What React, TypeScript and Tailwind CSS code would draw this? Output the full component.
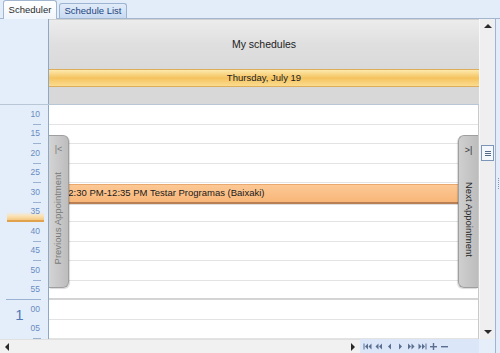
import React from "react";

const FONT = { fontFamily: '"Liberation Sans", Arial, sans-serif' };

const slots = ["10", "15", "20", "25", "30", "35", "40", "45", "50", "55", "00", "05"];

function RulerSlot({ label, index }: { label: string; index: number }) {
  const isHourEnd = index === 9;
  const isHour = index === 10;
  return (
    <div className="relative h-[19.5px] shrink-0 flex flex-col">
      {index === 5 && (
        <div className="absolute left-[7px] right-[4px] bottom-0 h-[10px] bg-gradient-to-b from-[#fdf1dc]/0 via-[#fbe2b4] to-[#f5c982] border-b-2 border-[#e0a24c]" />
      )}
      <div className="relative flex-1 flex items-center justify-end pr-[8px]">
        {isHour ? (
          <div className="flex items-start gap-[7px] pt-[7px]">
            <span className="text-[15px] leading-[15px] text-[#5479b3]">1</span>
            <span className="text-[8.5px] leading-[8px] text-[#6a8bc0] mt-[-2px]">{label}</span>
          </div>
        ) : (
          <span className="text-[8.5px] leading-[9px] text-[#6a8bc0]">{label}</span>
        )}
      </div>
      {isHourEnd ? (
        <div className="h-px w-[35px] self-end mr-[7px] bg-[#9bb2d3]" />
      ) : isHour ? (
        <div className="h-px w-[8px] self-end mr-[7px] bg-[#9bb2d3] mb-[2px]" />
      ) : (
        <div className="h-px w-[8px] self-end mr-[7px] bg-[#9bb2d3]" />
      )}
    </div>
  );
}

function Arrow({ dir, className = "" }: { dir: "l" | "r" | "u" | "d"; className?: string }) {
  const pts =
    dir === "l" ? "4,0 4,8 0,4" : dir === "r" ? "0,0 0,8 4,4" : dir === "u" ? "0,4 8,4 4,0" : "0,0 8,0 4,4";
  const w = dir === "l" || dir === "r" ? 4 : 8;
  const h = dir === "l" || dir === "r" ? 8 : 4;
  return (
    <svg width={w} height={h} viewBox={`0 0 ${w} ${h}`} className={className}>
      <polygon points={pts} fill="#2a2a2a" />
    </svg>
  );
}

function NavIcon({ kind }: { kind: string }) {
  const c = "#5a6f8f";
  return (
    <svg width="9" height="7" viewBox="0 0 9 7">
      {kind === "first" && (
        <g fill={c}>
          <rect x="0.5" y="0.5" width="1" height="6" />
          <polygon points="5,0.5 5,6.5 2,3.5" />
          <polygon points="8.5,0.5 8.5,6.5 5.5,3.5" />
        </g>
      )}
      {kind === "pp" && (
        <g fill={c}>
          <polygon points="4.5,0.5 4.5,6.5 1.5,3.5" />
          <polygon points="8,0.5 8,6.5 5,3.5" />
        </g>
      )}
      {kind === "p" && <polygon points="6,0.5 6,6.5 3,3.5" fill={c} />}
      {kind === "n" && <polygon points="3,0.5 3,6.5 6,3.5" fill={c} />}
      {kind === "nn" && (
        <g fill={c}>
          <polygon points="1,0.5 1,6.5 4,3.5" />
          <polygon points="4.5,0.5 4.5,6.5 7.5,3.5" />
        </g>
      )}
      {kind === "last" && (
        <g fill={c}>
          <polygon points="0.5,0.5 0.5,6.5 3.5,3.5" />
          <polygon points="4,0.5 4,6.5 7,3.5" />
          <rect x="7.5" y="0.5" width="1" height="6" />
        </g>
      )}
      {kind === "plus" && (
        <g fill={c}>
          <rect x="1" y="3" width="7" height="1.4" />
          <rect x="3.8" y="0" width="1.4" height="7" />
        </g>
      )}
      {kind === "minus" && <rect x="1" y="3" width="7" height="1.4" fill={c} />}
    </svg>
  );
}

export default function App() {
  return (
    <div className="w-[500px] h-[353px] overflow-hidden bg-[#e3edfa] flex flex-col" style={FONT}>
      {/* Tabs */}
      <div className="h-[19px] shrink-0 flex items-end pl-[3px] gap-[2px] border-b border-[#a3b6cf]">
        <div className="relative -mb-px h-[19px] w-[54px] rounded-t-[3px] border border-b-0 border-[#a3b6cf] bg-gradient-to-b from-white to-[#f1f6fd] flex items-center justify-center text-[9.5px] text-[#2b2b2b]">
          Scheduler
        </div>
        <div className="h-[15px] w-[68px] rounded-t-[3px] border border-b-0 border-[#9db3d2] bg-gradient-to-b from-[#e2ecf9] to-[#c8daf2] flex items-center justify-center text-[9.5px] text-[#1f4480]">
          Schedule List
        </div>
      </div>

      {/* Body */}
      <div className="flex-1 flex min-h-0">
        {/* Main column */}
        <div className="w-[479px] shrink-0 flex flex-col">
          {/* Header */}
          <div className="h-[86px] shrink-0 flex border-b border-[#b9c6d6]">
            <div className="w-[49px] shrink-0 border-r border-[#8ea7c8] bg-[#e4eefb]" />
            <div className="flex-1 flex flex-col">
              <div className="h-[50px] flex items-center justify-center bg-gradient-to-b from-[#ececec] via-[#dfdfdf] to-[#dadada] border-t border-[#d0d0d0] text-[10.5px] text-[#222]">
                My schedules
              </div>
              <div className="h-[18px] flex items-center justify-center border-y border-[#dcae5c] bg-gradient-to-b from-[#fde9ad] via-[#f5c35e] to-[#fbdc8e] text-[9.5px] text-[#222]">
                Thursday, July 19
              </div>
              <div className="flex-1 bg-[#d8d8d8]" />
            </div>
          </div>

          {/* Time grid */}
          <div className="flex-1 flex min-h-0 overflow-hidden">
            <div className="w-[49px] shrink-0 border-r border-[#8ea7c8] bg-[#e4eefb] flex flex-col overflow-hidden">
              {slots.map((s, i) => (
                <RulerSlot key={i} label={s} index={i} />
              ))}
            </div>
            <div className="relative flex-1 bg-white flex flex-col overflow-hidden border-r border-[#c9c9c9]">
              {slots.map((_, i) => (
                <div
                  key={i}
                  className={
                    i === 9
                      ? "h-[19.5px] shrink-0 border-b-2 border-[#d4d4d4]"
                      : "h-[19.5px] shrink-0 border-b border-[#e3e3e3]"
                  }
                />
              ))}

              {/* Appointment */}
              <div className="absolute left-0 right-0 top-[79px] h-[20px] bg-gradient-to-b from-[#fcc894] to-[#f8b679] border-t border-[#e8a86e] border-b-2 border-b-[#b98056] flex items-center pl-[14px] text-[9.5px] text-[#1a1a1a] whitespace-nowrap shadow-[0_1px_0_#dedede]">
                12:30 PM-12:35 PM Testar Programas (Baixaki)
              </div>

              {/* Previous appointment tab */}
              <div className="absolute left-0 top-[30px] h-[153px] w-[20px] rounded-r-[6px] border border-l-0 border-[#9f9f9f] bg-gradient-to-r from-[#d4d4d4] to-[#bdbdbd] shadow-[1px_1px_1px_rgba(0,0,0,0.15)] flex flex-col items-center pt-[9px]">
                <span className="text-[9px] leading-[9px] text-[#7a7a7a]">|&lt;</span>
                <span className="mt-[18px] text-[9.5px] text-[#7a7a7a] [writing-mode:vertical-rl] rotate-180 whitespace-nowrap">
                  Previous Appointment
                </span>
              </div>

              {/* Next appointment tab */}
              <div className="absolute right-0 top-[30px] h-[153px] w-[20px] rounded-l-[6px] border border-r-0 border-[#9f9f9f] bg-gradient-to-r from-[#cfcfcf] to-[#bdbdbd] shadow-[-1px_1px_1px_rgba(0,0,0,0.15)] flex flex-col items-center pt-[10px]">
                <span className="text-[9px] leading-[9px] text-[#333]">&gt;|</span>
                <span className="mt-[27px] text-[9.5px] text-[#1f1f1f] [writing-mode:vertical-rl] whitespace-nowrap">
                  Next Appointment
                </span>
              </div>
            </div>
          </div>

          {/* Bottom bar */}
          <div className="h-[14px] shrink-0 flex">
            <div className="w-[360px] shrink-0 bg-[#f1f1f1] border-t border-[#e0e0e0] flex items-center justify-between px-[5px]">
              <Arrow dir="l" />
              <Arrow dir="r" />
            </div>
            <div className="flex-1 bg-[#dbe7f8] flex items-center gap-[1px] pl-[2px]">
              {["first", "pp", "p", "n", "nn", "last", "plus", "minus"].map((k) => (
                <div key={k} className="w-[10px] h-[12px] flex items-center justify-center">
                  <NavIcon kind={k} />
                </div>
              ))}
            </div>
          </div>
        </div>

        {/* Vertical scrollbar */}
        <div className="w-[16px] shrink-0 flex flex-col">
          <div className="flex-1 bg-[#efefef] border-l border-[#f8f8f8] flex flex-col items-center">
            <div className="h-[14px] flex items-center">
              <Arrow dir="u" />
            </div>
            <div className="mt-[112px] w-[13px] h-[16px] border border-[#7c95b8] bg-[#f4f7fb] flex flex-col items-center justify-center gap-[1px]">
              <div className="w-[6px] h-px bg-[#556a8a]" />
              <div className="w-[6px] h-px bg-[#556a8a]" />
              <div className="w-[6px] h-px bg-[#556a8a]" />
            </div>
            <div className="flex-1" />
            <div className="h-[14px] flex items-center">
              <Arrow dir="d" />
            </div>
          </div>
          <div className="h-[14px] bg-[#e6eef9]" />
        </div>

        {/* Splitter */}
        <div className="flex-1 bg-[#e3edfa] border-l border-[#9fb4d2] flex flex-col items-center">
          <div className="mt-[159px] flex flex-col gap-[1px]">
            {[0, 1, 2, 3, 4, 5].map((i) => (
              <div key={i} className="w-px h-px bg-[#7f97bb]" />
            ))}
          </div>
        </div>
      </div>
    </div>
  );
}
